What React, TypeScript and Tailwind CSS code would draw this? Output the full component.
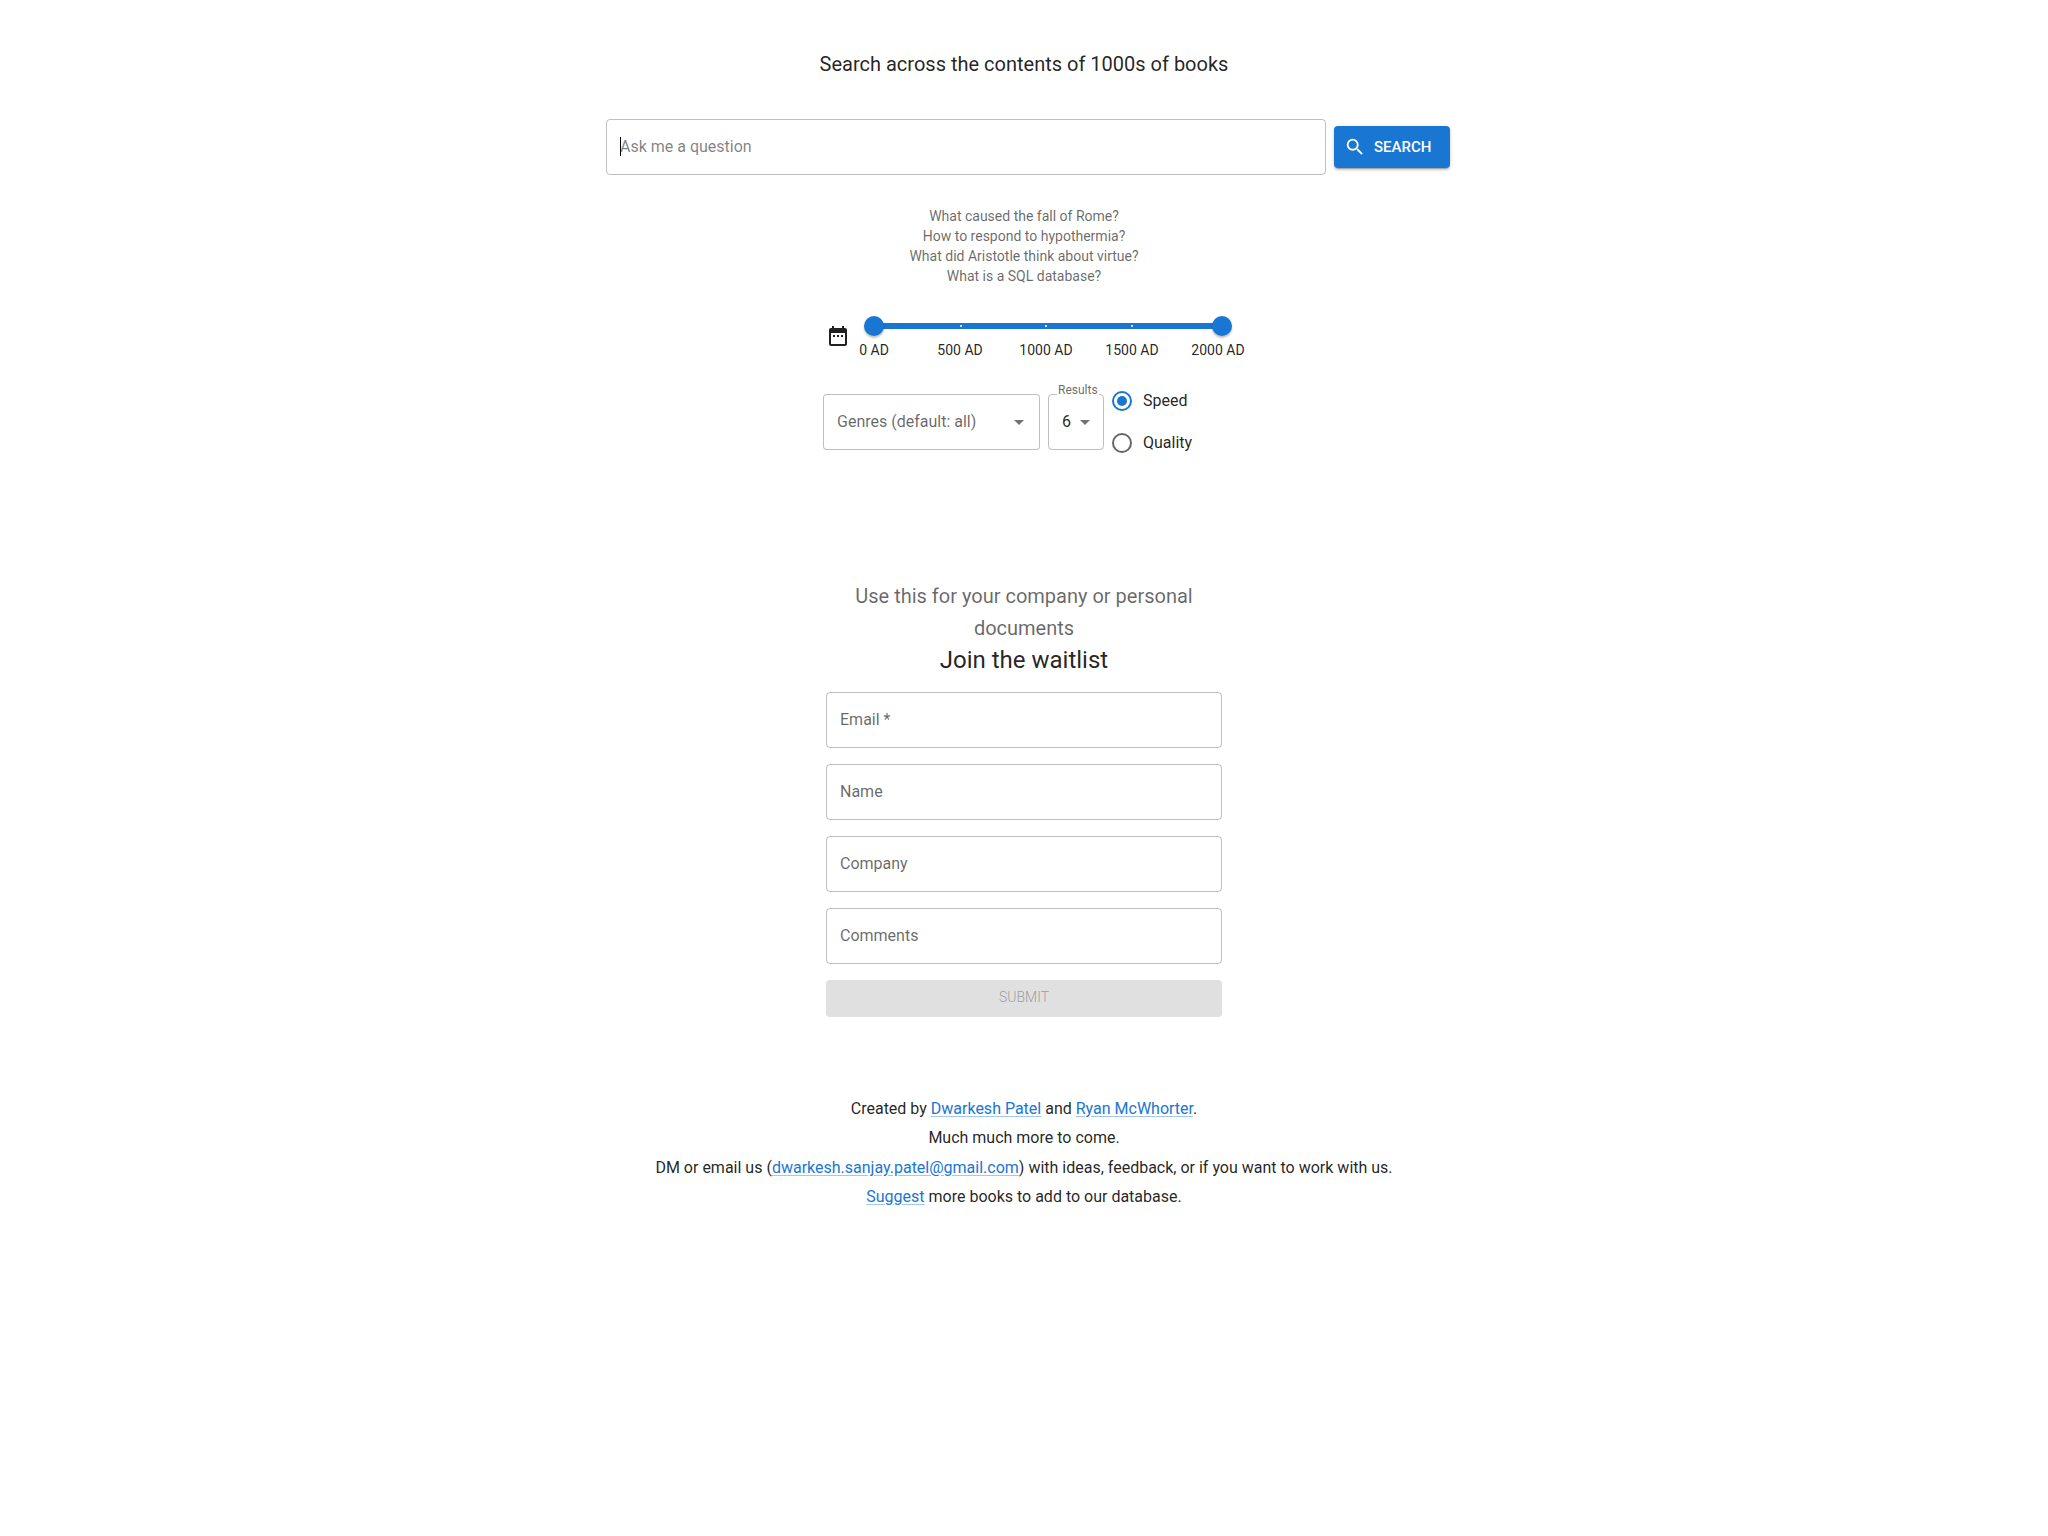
import React from "react";
import { MdArrowDropDown, MdDateRange, MdSearch } from "react-icons/md";

const examples = [
  "What caused the fall of Rome?",
  "How to respond to hypothermia?",
  "What did Aristotle think about virtue?",
  "What is a SQL database?",
];

const maxYear = 2023;
const marks = [0, 500, 1000, 1500, 2000];

const thumbClass =
  "pointer-events-none absolute inset-x-0 top-0 h-5 w-full appearance-none bg-transparent outline-none [&::-webkit-slider-thumb]:pointer-events-auto [&::-webkit-slider-thumb]:size-5 [&::-webkit-slider-thumb]:cursor-pointer [&::-webkit-slider-thumb]:appearance-none [&::-webkit-slider-thumb]:rounded-full [&::-webkit-slider-thumb]:bg-[#1976d2] [&::-webkit-slider-thumb]:shadow-[0_2px_2px_rgba(0,0,0,0.25)]";

const linkClass = "text-[#1976d2] underline decoration-[#1976d2]/40 underline-offset-2";

const YearSlider = () => {
  const [from, setFrom] = React.useState(0);
  const [to, setTo] = React.useState(maxYear);
  const left = (from / maxYear) * 100;
  const right = 100 - (to / maxYear) * 100;

  return (
    <div className="w-[368px]">
      <div className="relative h-5">
        {/* rail, with the selected range on top of it */}
        <div className="absolute inset-x-[10px] top-[7px] h-1.5 rounded-full bg-[#1976d2]/40">
          <div
            className="absolute inset-y-0 rounded-full bg-[#1976d2]"
            style={{ left: `${left}%`, right: `${right}%` }}
          />
          <div className="absolute top-0.5 right-1 left-0 flex justify-between">
            {marks.map((mark) => (
              <span key={mark} className="size-0.5 bg-white/80" />
            ))}
          </div>
        </div>
        <input
          type="range"
          aria-label="From year"
          min={0}
          max={maxYear}
          value={from}
          onChange={(e) => setFrom(Math.min(Number(e.target.value), to))}
          className={thumbClass}
        />
        <input
          type="range"
          aria-label="To year"
          min={0}
          max={maxYear}
          value={to}
          onChange={(e) => setTo(Math.max(Number(e.target.value), from))}
          className={thumbClass}
        />
      </div>
      <div className="mt-1 mr-3.5 ml-[10px] flex justify-between text-sm leading-5">
        {marks.map((mark) => (
          <span key={mark} className="flex w-0 justify-center whitespace-nowrap">
            {mark} AD
          </span>
        ))}
      </div>
    </div>
  );
};

const Field = ({ id, label, type = "text" }: { id: string; label: string; type?: string }) => {
  const [value, setValue] = React.useState("");
  return (
    <div className="relative">
      {value === "" && (
        <label
          htmlFor={id}
          className="pointer-events-none absolute top-4 left-3.5 leading-6 text-black/60"
        >
          {label}
        </label>
      )}
      <input
        id={id}
        type={type}
        aria-label={label}
        value={value}
        onChange={(e) => setValue(e.target.value)}
        className="h-14 w-full rounded border border-black/25 px-3.5 outline-none focus:border-[#1976d2]"
      />
    </div>
  );
};

const App = () => {
  const [question, setQuestion] = React.useState("");
  const [mode, setMode] = React.useState("speed");

  return (
    <main className="flex flex-col items-center px-4 pt-12 pb-20 font-[Roboto,sans-serif] text-base text-black/87">
      <h1 className="text-xl leading-8">Search across the contents of 1000s of books</h1>

      <form
        className="mt-[39px] flex w-full max-w-[852px] items-center gap-2 pl-2"
        onSubmit={(e) => e.preventDefault()}
      >
        <div className="relative flex-1">
          <input
            type="text"
            aria-label="Ask me a question"
            placeholder="Ask me a question"
            value={question}
            onChange={(e) => setQuestion(e.target.value)}
            className="h-14 w-full rounded border border-black/25 px-[13px] pb-0.5 caret-transparent outline-none placeholder:text-black/50"
          />
          {question === "" && <span className="absolute top-[18px] left-3.5 h-[19px] w-px bg-black" />}
        </div>
        <button
          type="submit"
          className="flex h-[42px] w-[116px] items-center gap-2 rounded bg-[#1976d2] pl-2.5 text-[15px] font-medium text-white shadow-[0_3px_1px_-2px_rgba(0,0,0,0.2),0_2px_2px_rgba(0,0,0,0.14),0_1px_5px_rgba(0,0,0,0.12)]"
        >
          <MdSearch className="size-[22px]" />
          SEARCH
        </button>
      </form>

      <ul className="mt-[31px] text-center text-sm leading-5 text-black/60">
        {examples.map((example) => (
          <li key={example}>{example}</li>
        ))}
      </ul>

      <div className="mt-[30px] flex items-start gap-3.5 pl-2.5">
        <MdDateRange className="mt-2 size-6" />
        <YearSlider />
      </div>

      <div className="mt-5 flex w-full max-w-[402px] items-center gap-2">
        <div className="relative">
          <select
            aria-label="Genres"
            className="h-14 w-[217px] appearance-none rounded border border-black/25 bg-white px-[13px] text-black/60 outline-none"
          >
            <option>Genres (default: all)</option>
          </select>
          <MdArrowDropDown className="pointer-events-none absolute top-4 right-[9px] size-6 text-black/55" />
        </div>
        <div className="relative">
          <label
            htmlFor="results"
            className="absolute -top-3.5 left-[9px] bg-white px-px text-xs leading-5 text-black/60"
          >
            Results
          </label>
          <select
            id="results"
            defaultValue="6"
            className="h-14 w-14 appearance-none rounded border border-black/25 bg-transparent px-[13px] outline-none"
          >
            <option>6</option>
          </select>
          <MdArrowDropDown className="pointer-events-none absolute top-4 right-[7px] size-6 text-black/55" />
        </div>
        <div>
          {["Speed", "Quality"].map((name) => (
            <label key={name} className="flex h-[42px] items-center gap-[11px]">
              <input
                type="radio"
                name="mode"
                value={name.toLowerCase()}
                checked={mode === name.toLowerCase()}
                onChange={(e) => setMode(e.target.value)}
                className="size-5 appearance-none rounded-full border-2 border-black/60 bg-clip-content p-[3px] checked:border-[#1976d2] checked:bg-[#1976d2]"
              />
              {name}
            </label>
          ))}
        </div>
      </div>

      <section className="mt-[116px] w-full max-w-[396px]">
        <p className="text-center text-xl leading-8 text-black/60">
          Use this for your company or personal documents
        </p>
        <h2 className="text-center text-2xl leading-8">Join the waitlist</h2>
        <form className="mt-4 flex flex-col gap-4" onSubmit={(e) => e.preventDefault()}>
          <Field id="email" label="Email *" type="email" />
          <Field id="name" label="Name" />
          <Field id="company" label="Company" />
          <Field id="comments" label="Comments" />
          <button
            type="submit"
            disabled
            className="h-[37px] rounded bg-[#e0e0e0] pb-1 text-sm font-light text-black/35"
          >
            SUBMIT
          </button>
        </form>
      </section>

      <footer className="mt-[77px] text-center leading-[29px]">
        <p>
          Created by{" "}
          <a href="#dwarkesh" className={linkClass}>
            Dwarkesh Patel
          </a>{" "}
          and{" "}
          <a href="#ryan" className={linkClass}>
            Ryan McWhorter
          </a>
          .
        </p>
        <p>Much much more to come.</p>
        <p className="mt-px">
          DM or email us (
          <a href="mailto:dwarkesh.sanjay.patel@gmail.com" className={linkClass}>
            dwarkesh.sanjay.patel@gmail.com
          </a>
          ) with ideas, feedback, or if you want to work with us.
        </p>
        <p>
          <a href="#suggest" className={linkClass}>
            Suggest
          </a>{" "}
          more books to add to our database.
        </p>
      </footer>
    </main>
  );
};

export default App;
